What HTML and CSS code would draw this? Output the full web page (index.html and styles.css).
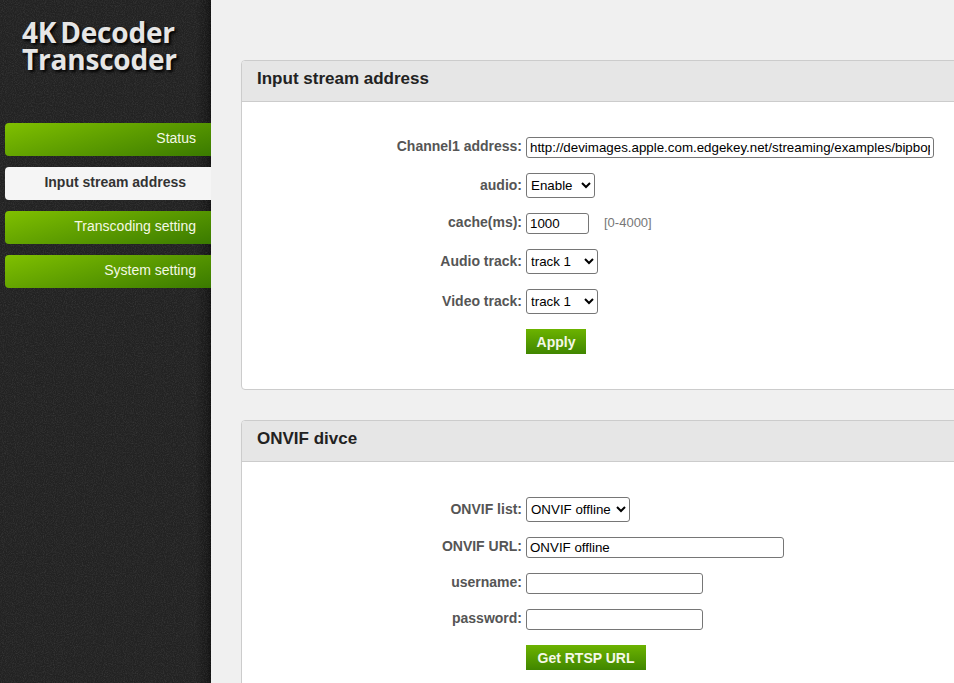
FILE: index.html
```html
<!DOCTYPE html>
<html lang="en">
<head>
<meta charset="utf-8">
<title>4K Decoder Transcoder</title>
<link rel="stylesheet" href="styles.css">
</head>
<body>
<div class="page">
  <aside class="sidebar">
    <svg class="noise" width="211" height="683" aria-hidden="true">
      <filter id="grain" x="0" y="0" width="100%" height="100%">
        <feTurbulence type="fractalNoise" baseFrequency="0.9" numOctaves="2" seed="4"/>
        <feColorMatrix type="matrix" values="0 0 0 0 1  0 0 0 0 1  0 0 0 0 1  1.1 0 0 0 -0.42"/>
      </filter>
      <rect width="211" height="683" filter="url(#grain)" opacity="0.16"/>
    </svg>
    <div class="logo">
      <div class="logo-line"><span class="logo-4k">4K</span>Decoder</div>
      <div class="logo-line">Transcoder</div>
    </div>
    <nav class="nav">
      <a class="nav-item">Status</a>
      <a class="nav-item nav-active">Input stream address</a>
      <a class="nav-item">Transcoding setting</a>
      <a class="nav-item">System setting</a>
    </nav>
  </aside>
  <main class="main">
    <section class="panel">
      <h2 class="panel-head">Input stream address</h2>
      <div class="panel-body">
        <div class="row"><label class="lbl">Channel1 address:</label><input class="field w-408" type="text" value="http://devimages.apple.com.edgekey.net/streaming/examples/bipbop"></div>
        <div class="row"><label class="lbl lbl-pick">audio:</label><select class="pick w-69"><option>Enable</option></select></div>
        <div class="row"><label class="lbl">cache(ms):</label><input class="field w-63" type="text" value="1000"><span class="hint">[0-4000]</span></div>
        <div class="row"><label class="lbl lbl-pick">Audio track:</label><select class="pick w-72"><option>track 1</option></select></div>
        <div class="row"><label class="lbl lbl-pick">Video track:</label><select class="pick w-72"><option>track 1</option></select></div>
        <div class="row"><span class="lbl"></span><button class="btn w-60" type="button">Apply</button></div>
      </div>
    </section>
    <section class="panel">
      <h2 class="panel-head">ONVIF divce</h2>
      <div class="panel-body">
        <div class="row"><label class="lbl lbl-pick">ONVIF list:</label><select class="pick w-104"><option>ONVIF offline</option></select></div>
        <div class="row"><label class="lbl">ONVIF URL:</label><input class="field w-258" type="text" value="ONVIF offline"></div>
        <div class="row"><label class="lbl">username:</label><input class="field w-177" type="text"></div>
        <div class="row"><label class="lbl">password:</label><input class="field w-177" type="password"></div>
        <div class="row"><span class="lbl"></span><button class="btn w-120" type="button">Get RTSP URL</button></div>
      </div>
    </section>
  </main>
</div>
</body>
</html>
```
FILE: styles.css
```css
* { box-sizing: border-box; }
html, body { margin: 0; height: 100%; overflow: hidden; }
body { font-family: "Liberation Sans", Arial, sans-serif; font-size: 14px; background: #f0f0f0; color: #222; }
.page { display: flex; height: 683px; overflow: hidden; }

.sidebar {
  position: relative;
  flex: 0 0 211px;
  width: 211px;
  background: linear-gradient(90deg, #222 0, #222 196px, #191919 207px, #111 211px);
}
.noise { position: absolute; left: 0; top: 0; }
.logo {
  position: relative;
  padding: 19px 0 0 22px;
  height: 123px;
  font-family: "Open Sans", sans-serif;
  font-weight: 700;
  font-size: 28px;
  line-height: 27px;
  color: #e6e6e6;
  text-shadow: 2px 2px 3px #000;
}
.logo-line { white-space: nowrap; letter-spacing: -0.2px; }
.logo-4k { margin-right: 4px; }

.nav { position: relative; display: flex; flex-direction: column; gap: 11px; padding-left: 5px; }
.nav-item {
  display: block;
  height: 33px;
  line-height: 30px;
  padding-right: 15px;
  text-align: right;
  color: #f4f8e4;
  border-radius: 4px 0 0 4px;
  background: linear-gradient(165deg, #80c000 0, #60a000 45%, #3a7a00 100%);
}
.nav-active {
  background: #f5f5f5;
  color: #333;
  font-weight: 700;
  padding-right: 25px;
}

.main { flex: 1 1 auto; min-width: 0; padding: 60px 0 0 30px; display: flex; flex-direction: column; gap: 30px; }
.panel {
  flex: none;
  width: 900px;
  background: #fff;
  border: 1px solid #ccc;
  border-radius: 4px;
}
.panel-head {
  margin: 0;
  height: 41px;
  padding-left: 15px;
  font-size: 17px;
  line-height: 35px;
  font-weight: 700;
  color: #222;
  background: #e6e6e6;
  border-bottom: 1px solid #ccc;
  border-radius: 3px 3px 0 0;
}
.panel-body { display: flex; flex-direction: column; gap: 15px; padding: 35px 0 35px; }
.row { display: flex; align-items: center; }
.lbl { flex: 0 0 284px; padding-right: 4px; padding-bottom: 3px; text-align: right; font-weight: 700; color: #555; }
.lbl-pick { padding-bottom: 1px; }
.field, .pick {
  font-family: "Liberation Sans", Arial, sans-serif;
  font-size: 13.33px;
  color: #000;
  background: #fff;
  border: 1px solid #767676;
  border-radius: 3px;
  margin: 0;
}
.field { height: 21px; padding: 1px 3px; }
.pick { height: 25px; padding: 0 0 1px 0; }
.hint { margin-left: 15px; margin-bottom: 2px; font-size: 13px; color: #777; }
.btn {
  height: 25px;
  padding: 0;
  border: 0;
  color: #f4f8e8;
  font-family: "Liberation Sans", Arial, sans-serif;
  font-size: 14px;
  font-weight: 700;
  background: linear-gradient(180deg, #6cb300 0, #408600 100%);
}
.w-408 { width: 408px; }
.w-258 { width: 258px; }
.w-177 { width: 177px; }
.w-120 { width: 120px; }
.w-104 { width: 104px; }
.w-72 { width: 72px; }
.w-69 { width: 69px; }
.w-63 { width: 63px; }
.w-60 { width: 60px; }
```
